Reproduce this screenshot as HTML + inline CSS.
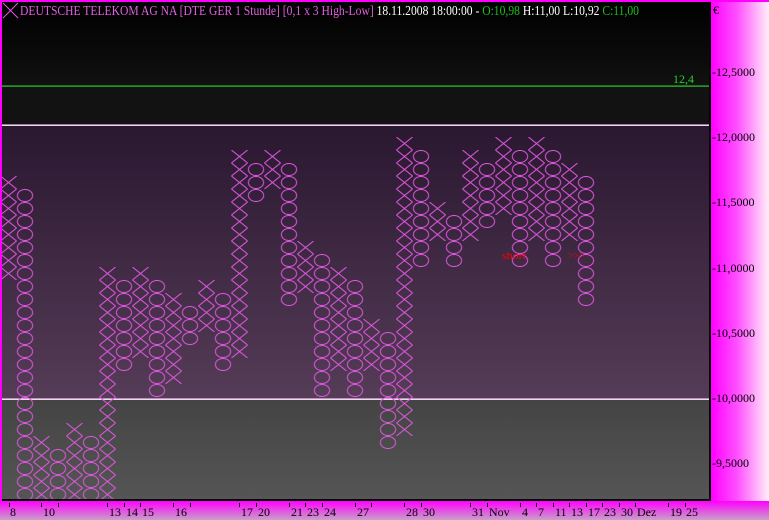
<!DOCTYPE html>
<html><head><meta charset="utf-8"><style>
html,body{margin:0;padding:0;background:#000;}
svg{display:block;}
text{font-family:"Liberation Serif",serif;}
</style></head><body>
<svg width="769" height="520" viewBox="0 0 769 520" xmlns="http://www.w3.org/2000/svg">
<defs>
<linearGradient id="gTop" x1="0" y1="0" x2="0" y2="1"><stop offset="0" stop-color="#000"/><stop offset="1" stop-color="#111"/></linearGradient>
<linearGradient id="gPur" x1="0" y1="0" x2="0" y2="1"><stop offset="0" stop-color="#2a1730"/><stop offset="1" stop-color="#553c57"/></linearGradient>
<linearGradient id="gGray" x1="0" y1="0" x2="0" y2="1"><stop offset="0" stop-color="#444"/><stop offset="1" stop-color="#555"/></linearGradient>
<linearGradient id="gRight" x1="0" y1="0" x2="1" y2="0"><stop offset="0" stop-color="#ff00ff"/><stop offset="0.45" stop-color="#ff50ff"/><stop offset="1" stop-color="#fff0f8"/></linearGradient>
<linearGradient id="gBot" x1="0" y1="0" x2="0" y2="1"><stop offset="0" stop-color="#ff00ff"/><stop offset="1" stop-color="#c8a0c8"/></linearGradient>
<pattern id="pX" patternUnits="userSpaceOnUse" x="-8.25" y="7" width="16.5" height="13">
<path d="M0.2 0 L16.3 13 M16.3 0 L0.2 13" stroke="#e058e0" stroke-width="1" fill="none"/>
</pattern>
<pattern id="pO" patternUnits="userSpaceOnUse" x="-8.25" y="7" width="16.5" height="13">
<ellipse cx="8.25" cy="6.5" rx="7.6" ry="6" stroke="#e058e0" stroke-width="1" fill="none"/>
</pattern>
<clipPath id="cc"><rect x="2" y="2" width="708" height="497"/></clipPath>
</defs>
<rect x="0" y="0" width="769" height="520" fill="#ff00ff"/>
<rect x="2" y="2" width="708" height="84" fill="url(#gTop)"/>
<rect x="2" y="86" width="708" height="39" fill="#121212"/>
<rect x="2" y="126" width="708" height="273" fill="url(#gPur)"/>
<rect x="2" y="400" width="708" height="99" fill="url(#gGray)"/>
<rect x="2" y="85.5" width="708" height="1.2" fill="#2ccc2c"/>
<rect x="2" y="124.5" width="708" height="1.3" fill="#ffffff"/>
<rect x="2" y="398.5" width="708" height="1.3" fill="#ffffff"/>
<rect x="709" y="2" width="2" height="499" fill="#000"/>
<rect x="2" y="499" width="709" height="2" fill="#000"/>
<rect x="711" y="0" width="58" height="501" fill="url(#gRight)"/>
<rect x="0" y="501" width="769" height="19" fill="url(#gBot)"/>
<rect x="0" y="0" width="769" height="2" fill="#ff00ff"/>
<rect x="0" y="0" width="2" height="501" fill="#ff00ff"/>

<g clip-path="url(#cc)">
<rect transform="translate(8.5,0)" x="-8.25" y="176" width="16.5" height="104" fill="url(#pX)"/>
<rect transform="translate(25,0)" x="-8.25" y="189" width="16.5" height="312" fill="url(#pO)"/>
<rect transform="translate(41.5,0)" x="-8.25" y="436" width="16.5" height="65" fill="url(#pX)"/>
<rect transform="translate(58,0)" x="-8.25" y="449" width="16.5" height="52" fill="url(#pO)"/>
<rect transform="translate(74.5,0)" x="-8.25" y="423" width="16.5" height="78" fill="url(#pX)"/>
<rect transform="translate(91,0)" x="-8.25" y="436" width="16.5" height="65" fill="url(#pO)"/>
<rect transform="translate(107.5,0)" x="-8.25" y="267" width="16.5" height="234" fill="url(#pX)"/>
<rect transform="translate(124,0)" x="-8.25" y="280" width="16.5" height="91" fill="url(#pO)"/>
<rect transform="translate(140.5,0)" x="-8.25" y="267" width="16.5" height="91" fill="url(#pX)"/>
<rect transform="translate(157,0)" x="-8.25" y="280" width="16.5" height="117" fill="url(#pO)"/>
<rect transform="translate(173.5,0)" x="-8.25" y="293" width="16.5" height="91" fill="url(#pX)"/>
<rect transform="translate(190,0)" x="-8.25" y="306" width="16.5" height="39" fill="url(#pO)"/>
<rect transform="translate(206.5,0)" x="-8.25" y="280" width="16.5" height="52" fill="url(#pX)"/>
<rect transform="translate(223,0)" x="-8.25" y="293" width="16.5" height="78" fill="url(#pO)"/>
<rect transform="translate(239.5,0)" x="-8.25" y="150" width="16.5" height="208" fill="url(#pX)"/>
<rect transform="translate(256,0)" x="-8.25" y="163" width="16.5" height="39" fill="url(#pO)"/>
<rect transform="translate(272.5,0)" x="-8.25" y="150" width="16.5" height="39" fill="url(#pX)"/>
<rect transform="translate(289,0)" x="-8.25" y="163" width="16.5" height="143" fill="url(#pO)"/>
<rect transform="translate(305.5,0)" x="-8.25" y="241" width="16.5" height="52" fill="url(#pX)"/>
<rect transform="translate(322,0)" x="-8.25" y="254" width="16.5" height="143" fill="url(#pO)"/>
<rect transform="translate(338.5,0)" x="-8.25" y="267" width="16.5" height="104" fill="url(#pX)"/>
<rect transform="translate(355,0)" x="-8.25" y="280" width="16.5" height="117" fill="url(#pO)"/>
<rect transform="translate(371.5,0)" x="-8.25" y="319" width="16.5" height="52" fill="url(#pX)"/>
<rect transform="translate(388,0)" x="-8.25" y="332" width="16.5" height="117" fill="url(#pO)"/>
<rect transform="translate(404.5,0)" x="-8.25" y="137" width="16.5" height="299" fill="url(#pX)"/>
<rect transform="translate(421,0)" x="-8.25" y="150" width="16.5" height="117" fill="url(#pO)"/>
<rect transform="translate(437.5,0)" x="-8.25" y="202" width="16.5" height="39" fill="url(#pX)"/>
<rect transform="translate(454,0)" x="-8.25" y="215" width="16.5" height="52" fill="url(#pO)"/>
<rect transform="translate(470.5,0)" x="-8.25" y="150" width="16.5" height="91" fill="url(#pX)"/>
<rect transform="translate(487,0)" x="-8.25" y="163" width="16.5" height="65" fill="url(#pO)"/>
<rect transform="translate(503.5,0)" x="-8.25" y="137" width="16.5" height="78" fill="url(#pX)"/>
<rect transform="translate(520,0)" x="-8.25" y="150" width="16.5" height="117" fill="url(#pO)"/>
<rect transform="translate(536.5,0)" x="-8.25" y="137" width="16.5" height="104" fill="url(#pX)"/>
<rect transform="translate(553,0)" x="-8.25" y="150" width="16.5" height="117" fill="url(#pO)"/>
<rect transform="translate(569.5,0)" x="-8.25" y="163" width="16.5" height="78" fill="url(#pX)"/>
<rect transform="translate(586,0)" x="-8.25" y="176" width="16.5" height="130" fill="url(#pO)"/>
</g>

<text x="502" y="259" font-size="11" fill="#ff0000" textLength="24" lengthAdjust="spacingAndGlyphs">short</text>
<text x="568" y="259" font-size="11" fill="#ff0000" textLength="16" lengthAdjust="spacingAndGlyphs">&gt;&gt;&gt;</text>
<text x="673" y="83" font-size="12" fill="#2ccc2c">12,4</text>

<path d="M3 3 L18 18 M18 3 L3 18" stroke="#e058e0" stroke-width="1"/>
<text x="20" y="15" font-size="13.5" textLength="619" lengthAdjust="spacingAndGlyphs"><tspan fill="#e060e0">DEUTSCHE TELEKOM AG NA [DTE GER  1 Stunde] [0,1 x 3 High-Low] </tspan><tspan fill="#ffffff">18.11.2008 18:00:00 - </tspan><tspan fill="#1ec01e">O:10,98 </tspan><tspan fill="#ffffff">H:11,00 L:10,92 </tspan><tspan fill="#1ec01e">C:11,00</tspan></text>

<g font-size="12" fill="#000">
<text x="713" y="14">€</text>
<text x="712" y="76">-12,5000</text>
<text x="712" y="141">-12,0000</text>
<text x="712" y="206">-11,5000</text>
<text x="712" y="272">-11,0000</text>
<text x="712" y="337">-10,5000</text>
<text x="712" y="402">-10,0000</text>
<text x="712" y="467">-9,5000</text>
</g>

<g stroke="#000" stroke-width="1">
<path d="M9.5 503v4M41.5 503v4M58.5 503v4M107.5 503v4M124.5 503v4M140.5 503v4M173.5 503v4M190.5 503v4M239.5 503v4M256.5 503v4M289.5 503v4M305.5 503v4M322.5 503v4M355.5 503v4M371.5 503v4M404.5 503v4M421.5 503v4M470.5 503v4M487.5 503v4M520.5 503v4M536.5 503v4M553.5 503v4M569.5 503v4M586.5 503v4M602.5 503v4M619.5 503v4M635.5 503v4M668.5 503v4M685.5 503v4"/>
</g>
<g font-size="12" fill="#000">
<text x="10" y="516">8</text>
<text x="43" y="516">10</text>
<text x="109" y="516">13</text>
<text x="126" y="516">14</text>
<text x="142" y="516">15</text>
<text x="175" y="516">16</text>
<text x="241" y="516">17</text>
<text x="258" y="516">20</text>
<text x="291" y="516">21</text>
<text x="307" y="516">23</text>
<text x="324" y="516">24</text>
<text x="357" y="516">27</text>
<text x="406" y="516">28</text>
<text x="423" y="516">30</text>
<text x="472" y="516">31</text>
<text x="489" y="516">Nov</text>
<text x="522" y="516">4</text>
<text x="538" y="516">7</text>
<text x="555" y="516">11</text>
<text x="571" y="516">13</text>
<text x="588" y="516">17</text>
<text x="604" y="516">23</text>
<text x="621" y="516">30</text>
<text x="637" y="516">Dez</text>
<text x="670" y="516">19</text>
<text x="686" y="516">25</text>
</g>
</svg>
</body></html>
